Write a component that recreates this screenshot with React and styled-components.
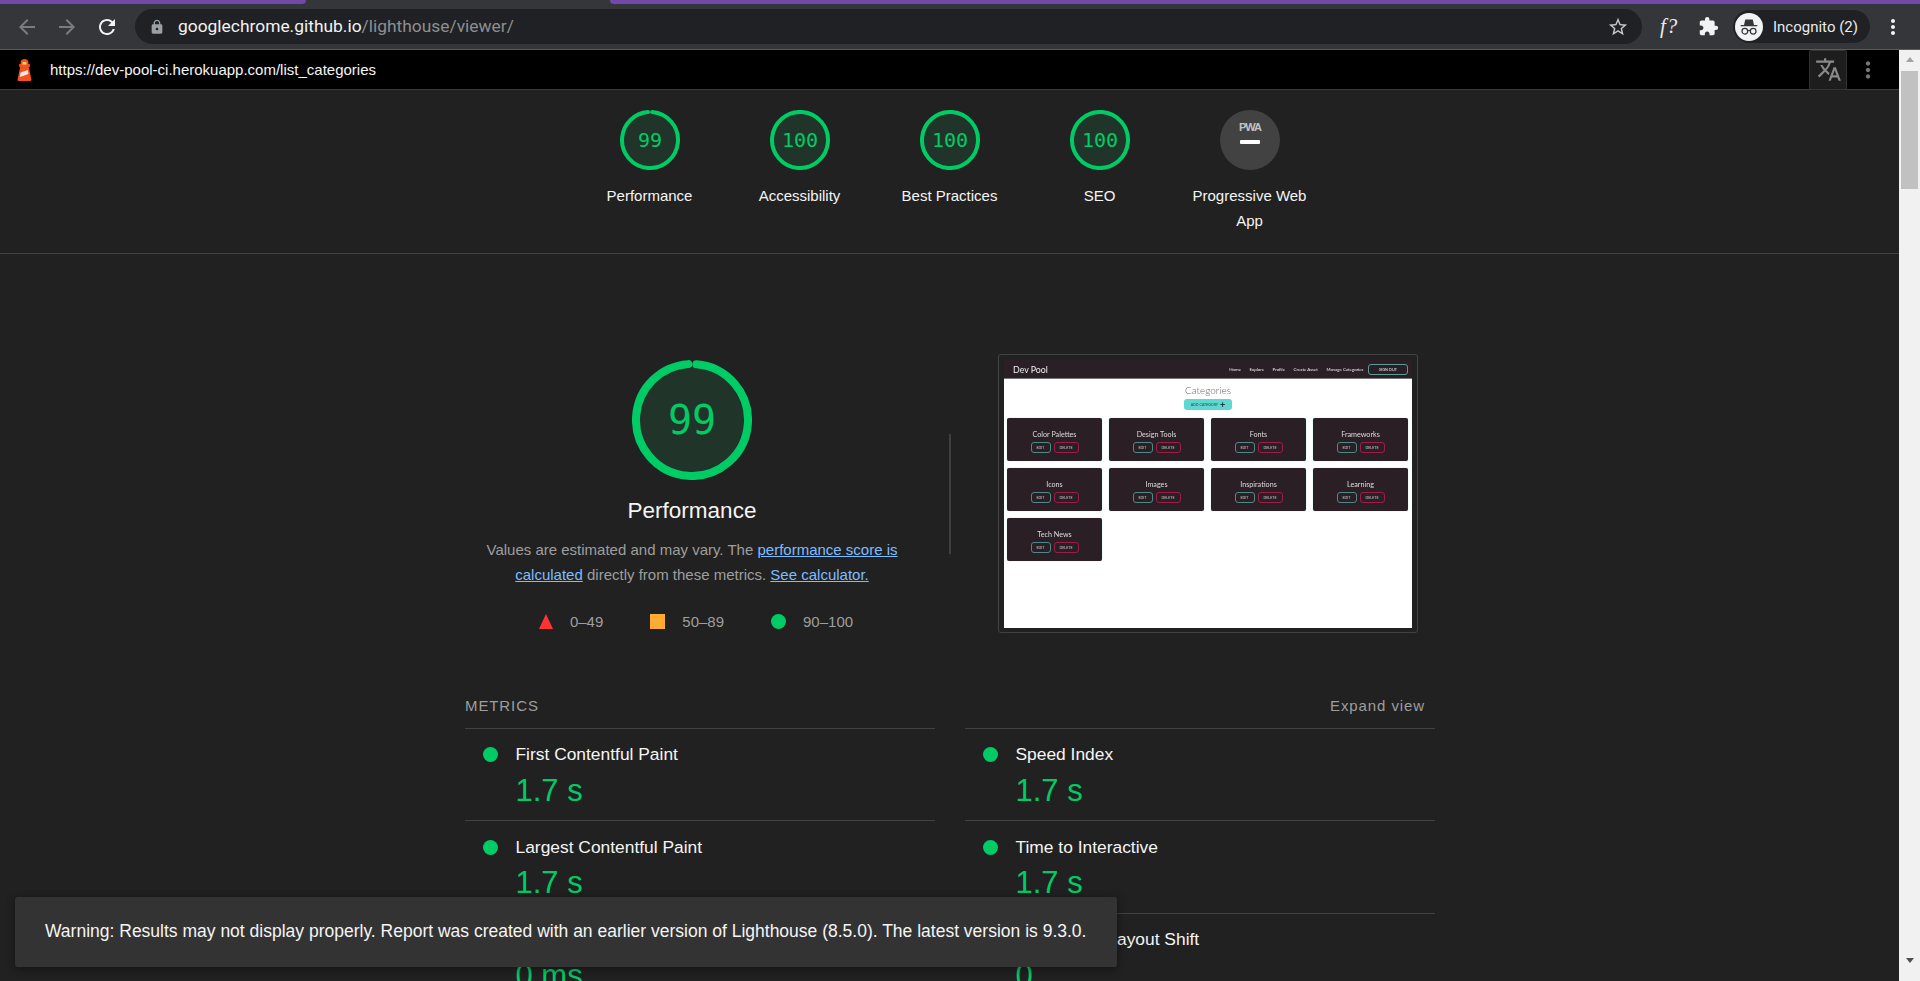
import React from 'react';
import styled, { createGlobalStyle } from 'styled-components';
import { MdArrowBack, MdArrowForward, MdRefresh, MdLock, MdExtension, MdMoreVert, MdTranslate, MdStarBorder } from 'react-icons/md';

const Global = createGlobalStyle`
  html, body { margin: 0; padding: 0; height: 981px; overflow: hidden; background: #212121; }
  * { box-sizing: border-box; }
`;

const Page = styled.div`
  position: relative;
  width: 1920px;
  height: 981px;
  overflow: hidden;
  display: flex;
  flex-direction: column;
  font-family: 'Liberation Sans', Arial, sans-serif;
  background: #212121;
`;

/* browser chrome */
const ChromeBar = styled.div`
  position: relative;
  height: 50px;
  flex: none;
  background: #35363a;
  border-bottom: 1px solid #5a5b5e;
  display: flex;
  align-items: center;
  padding: 4px 0 0 15px;
`;

const TabEdge = styled.div`
  position: absolute;
  top: 0;
  height: 4px;
  background: #7248a8;
  left: ${(p) => p.$left}px;
  width: ${(p) => p.$width}px;
  border-radius: ${(p) => p.$radius};
`;

const NavIcon = styled.span`
  width: 40px;
  height: 24px;
  display: flex;
  align-items: center;
  justify-content: flex-start;
  color: ${(p) => p.$color};
  font-size: 24px;
`;

const Omnibox = styled.div`
  width: 1507px;
  height: 35px;
  border-radius: 18px;
  background: #202124;
  display: flex;
  align-items: center;
  padding: 0 13px 0 14px;
  color: #9aa0a6;
  font-size: 16px;
`;

const UrlText = styled.div`
  margin-left: 13px;
  padding-bottom: 2px;
  flex: 1;
  font-family: Roboto, sans-serif;
  font-size: 17.4px;
  color: #8d8f92;
  span { color: #f1f3f4; }
`;

const ChromeRight = styled.div`
  display: flex;
  align-items: center;
  margin-left: 18px;
`;

const Fx = styled.span`
  width: 38px;
  font-family: 'Liberation Serif', serif;
  font-style: italic;
  font-size: 21px;
  letter-spacing: 1px;
  color: #e8eaed;
`;

const Puzzle = styled.span`
  width: 35px;
  display: flex;
  color: #f1f3f4;
  font-size: 21px;
`;

const ProfilePill = styled.div`
  width: 137px;
  height: 33px;
  border-radius: 17px;
  background: #202124;
  display: flex;
  align-items: center;
  padding-left: 2px;
  gap: 10px;
  color: #e8eaed;
  font-family: Roboto, sans-serif;
  font-size: 15px;
`;

const Avatar = styled.span`
  width: 28px;
  height: 28px;
  border-radius: 50%;
  background: #f1f3f4;
  display: flex;
  align-items: center;
  justify-content: center;
`;

const ChromeMenu = styled.span`
  display: flex;
  margin-left: 11px;
  font-size: 24px;
  color: #f1f3f4;
`;

/* body */
const Body = styled.div`
  flex: 1;
  display: flex;
  min-height: 0;
`;

const Report = styled.div`
  flex: 1;
  min-width: 0;
  overflow: hidden;
  display: flex;
  flex-direction: column;
`;

const Scrollbar = styled.div`
  width: 21px;
  flex: none;
  background: #f1f1f1;
  display: flex;
  flex-direction: column;
  align-items: center;
  padding: 7px 2px 0;
`;

const ScrollArrow = styled.div`
  width: 0;
  height: 0;
  border-left: 4px solid transparent;
  border-right: 4px solid transparent;
  ${(p) => (p.$down ? 'border-top: 5px solid #505050;' : 'border-bottom: 5px solid #a3a3a3;')}
`;

const ScrollThumb = styled.div`
  width: 17px;
  height: 118px;
  background: #c1c1c1;
  margin-top: 9px;
  margin-bottom: auto;
`;

const ScrollBottom = styled.div`
  height: 18px;
`;

const TopBar = styled.div`
  height: 40px;
  flex: none;
  background: #000;
  border-bottom: 1px solid #3b3b3b;
  display: flex;
  align-items: center;
  padding-left: 17px;
`;

const TopUrl = styled.div`
  flex: 1;
  margin-left: 18px;
  padding-bottom: 1px;
  color: #f5f5f5;
  font-size: 15px;
`;

const TranslateBtn = styled.div`
  width: 38px;
  height: 40px;
  background: #1d1d1d;
  border: 1px solid #333;
  border-radius: 2px;
  display: flex;
  align-items: center;
  justify-content: center;
  color: #8a8a8a;
  font-size: 27px;
`;

const TopMenu = styled.div`
  width: 52px;
  padding-right: 10px;
  display: flex;
  justify-content: center;
  color: #757575;
  font-size: 26px;
`;

/* score header */
const ScoresHeader = styled.div`
  flex: none;
  height: 164px;
  padding-top: 20px;
  border-bottom: 1px solid #424242;
  display: flex;
  justify-content: center;
  align-items: flex-start;
`;

const GaugeItem = styled.div`
  width: 150px;
  display: flex;
  flex-direction: column;
  align-items: center;
`;

const GaugeLabel = styled.div`
  margin-top: 13px;
  width: 125px;
  text-align: center;
  font-size: 15px;
  line-height: 25px;
  color: #f5f5f5;
`;

const ScoreText = styled.text`
  font-family: 'DejaVu Sans Mono', monospace;
  fill: #00cc66;
  text-anchor: middle;
`;

const PwaText = styled.text`
  font-family: 'Liberation Sans', Arial, sans-serif;
  font-weight: 700;
  fill: #c2c2c2;
  text-anchor: middle;
  letter-spacing: -1px;
`;

/* category */
const Category = styled.div`
  width: 970px;
  margin: 100px auto 0 465px;
  flex: none;
`;

const Summary = styled.div`
  display: flex;
  align-items: flex-start;
`;

const ScoreBlock = styled.div`
  width: 454px;
  padding-top: 6px;
  display: flex;
  flex-direction: column;
  align-items: center;
`;

const BigTitle = styled.h2`
  margin: 13px 0 0;
  font-size: 22.5px;
  line-height: 36px;
  font-weight: 400;
  color: #f5f5f5;
`;

const Description = styled.p`
  margin: 8px 0 0;
  width: 454px;
  text-align: center;
  font-size: 15px;
  line-height: 25px;
  color: #9e9e9e;
  a { color: #7dbdff; text-decoration: underline; }
`;

const Legend = styled.div`
  margin-top: 22.5px;
  padding-left: 8px;
  display: flex;
  align-items: center;
  height: 24px;
`;

const LegendItem = styled.div`
  display: flex;
  align-items: center;
  gap: 17px;
  font-size: 15px;
  color: #9e9e9e;
  margin-right: 47px;
  &:last-child { margin-right: 0; }
`;

const Triangle = styled.span`
  width: 0;
  height: 0;
  border-left: 7.5px solid transparent;
  border-right: 7.5px solid transparent;
  border-bottom: 15px solid #ff3333;
`;

const Square = styled.span`
  width: 15px;
  height: 15px;
  background: #ffaa33;
`;

const Dot = styled.span`
  width: 15px;
  height: 15px;
  flex: none;
  border-radius: 50%;
  background: #00cc66;
`;

const Divider = styled.div`
  width: 2px;
  height: 120px;
  background: #3f3f3f;
  margin: 80px 47px 0 30px;
  flex: none;
`;

/* page screenshot thumbnail */
const Frame = styled.div`
  width: 420px;
  height: 279px;
  border: 1px solid #424242;
  border-radius: 3px;
  padding: 5px;
  flex: none;
`;

const Thumb = styled.div`
  width: 408px;
  height: 268px;
  background: #fff;
  font-family: Lato, sans-serif;
  filter: blur(0.5px);
`;

const ThumbNav = styled.div`
  height: 19px;
  background: #2b1f26;
  border-bottom: 1px solid #777;
  display: flex;
  align-items: center;
  padding: 0 4px 0 9px;
  color: #eee;
`;

const ThumbBrand = styled.div`
  font-size: 8.8px;
  margin-right: auto;
`;

const ThumbLink = styled.div`
  font-size: 4.4px;
  margin-right: 8.5px;
`;

const ThumbSignOut = styled.div`
  width: 40px;
  height: 11px;
  margin-left: -4px;
  border: 1px solid #5c9c98;
  border-radius: 3px;
  display: flex;
  align-items: center;
  justify-content: center;
  font-size: 3.8px;
`;

const ThumbHeading = styled.div`
  margin-top: 5px;
  text-align: center;
  font-size: 10px;
  font-weight: 300;
  line-height: 12px;
  color: #666;
`;

const ThumbAdd = styled.div`
  width: 48px;
  height: 11px;
  margin: 3px auto 0;
  background: #5fd8d0;
  border-radius: 3px;
  display: flex;
  align-items: center;
  justify-content: center;
  gap: 2px;
  font-size: 3.6px;
  color: #245;
  b { font-size: 9px; line-height: 8px; color: #234; }
`;

const ThumbGrid = styled.div`
  margin-top: 8px;
  padding: 0 3px;
  display: grid;
  grid-template-columns: repeat(4, 95px);
  grid-auto-rows: 43px;
  column-gap: 7px;
  row-gap: 7px;
`;

const ThumbCard = styled.div`
  background: #2b1f26;
  border-radius: 2px;
  box-shadow: 0 0 1px #5fd8d0;
  display: flex;
  flex-direction: column;
  align-items: center;
  padding-top: 12px;
  color: #ddd;
  font-size: 7.2px;
  line-height: 9px;
`;

const ThumbActions = styled.div`
  display: flex;
  gap: 3px;
  margin-top: 3px;
`;

const ThumbBtn = styled.div`
  width: ${(p) => (p.$danger ? 25 : 20)}px;
  height: 11px;
  border: 1px solid ${(p) => (p.$danger ? '#a01c44' : '#4f8a88')};
  border-radius: 3px;
  display: flex;
  align-items: center;
  justify-content: center;
  font-size: 3.6px;
  color: #ccc;
`;

/* metrics */
const MetricsHead = styled.div`
  margin-top: 57px;
  height: 30px;
  display: flex;
  justify-content: space-between;
  align-items: center;
  padding-right: 10px;
  font-size: 15px;
  letter-spacing: 0.9px;
  color: #9e9e9e;
`;

const MetricsGrid = styled.div`
  display: grid;
  grid-template-columns: 470px 470px;
  column-gap: 30px;
  margin-top: 7px;
`;

const MetricRow = styled.div`
  height: 92.5px;
  border-top: 1px solid #424242;
  display: grid;
  grid-template-columns: 32.5px 1fr;
  grid-template-rows: 36px 35px;
  padding: 8px 0 0 18px;
  align-items: center;
`;

const MetricTitle = styled.div`
  font-size: 17.4px;
  color: #f5f5f5;
`;

const MetricValue = styled.div`
  grid-column: 2;
  font-size: 31px;
  line-height: 35px;
  color: #00cc66;
`;

/* toast, sits over the report */
const Toast = styled.div`
  position: absolute;
  left: 15px;
  top: 897px;
  width: 1102px;
  height: 70px;
  background: #333;
  border-radius: 3px;
  box-shadow: 0 2px 10px rgba(0, 0, 0, 0.45);
  padding: 0 30px 2px;
  display: flex;
  align-items: center;
  font-size: 17.5px;
  color: #f5f5f5;
`;

function Gauge({ score, size }) {
  const r = 56;
  const circ = 2 * Math.PI * r;
  return (
    <svg width={size} height={size} viewBox="0 0 120 120">
      <circle cx="60" cy="60" r={r} fill="#20342a" stroke="none" />
      <circle
        cx="60"
        cy="60"
        r={r}
        fill="none"
        stroke="#00cc66"
        strokeWidth="8"
        strokeLinecap={score < 100 ? 'round' : 'butt'}
        strokeDasharray={score < 100 ? `${circ * 0.975} ${circ}` : undefined}
        transform="rotate(-85.5 60 60)"
      />
      <ScoreText x="60" y="74" fontSize="40">{score}</ScoreText>
    </svg>
  );
}

function PwaGauge() {
  return (
    <svg width="60" height="60" viewBox="0 0 60 60">
      <circle cx="30" cy="30" r="30" fill="#424242" />
      <PwaText x="30" y="21" fontSize="11">PWA</PwaText>
      <rect x="20" y="30" width="20" height="4" rx="1" fill="#fff" />
    </svg>
  );
}

function LighthouseIcon() {
  return (
    <svg width="15" height="22" viewBox="0 0 15 22">
      <path d="M7.5 0 C5.5 0 4 1.2 3.6 3 V5 H2.2 V8 H3.2 L0.6 20.5 Q0.4 22 2 22 H13 Q14.6 22 14.4 20.5 L11.8 8 H12.8 V5 H11.4 V3 C11 1.2 9.5 0 7.5 0 Z" fill="#f4511e" />
      <rect x="5.6" y="3" width="3.8" height="2.6" fill="#fdd663" />
      <path d="M3.6 13.5 L10.8 11 L11.4 15 L3 18 Z" fill="#fbe9e7" />
    </svg>
  );
}

function IncognitoIcon() {
  return (
    <svg width="20" height="20" viewBox="0 0 24 24" fill="#35363a">
      <path d="M7.5 3 H16.5 L18 9.5 H22 V11 H2 V9.5 H6 Z" />
      <circle cx="7" cy="17" r="3.4" fill="none" stroke="#35363a" strokeWidth="1.5" />
      <circle cx="17" cy="17" r="3.4" fill="none" stroke="#35363a" strokeWidth="1.5" />
      <path d="M10.4 16.5 Q12 15.5 13.6 16.5" fill="none" stroke="#35363a" strokeWidth="1.3" />
    </svg>
  );
}

const categories = [
  'Color Palettes', 'Design Tools', 'Fonts', 'Frameworks',
  'Icons', 'Images', 'Inspirations', 'Learning', 'Tech News',
];

const navLinks = ['Home', 'Explore', 'Profile', 'Create Asset', 'Manage Categories'];

const scores = [
  { score: 99, label: 'Performance' },
  { score: 100, label: 'Accessibility' },
  { score: 100, label: 'Best Practices' },
  { score: 100, label: 'SEO' },
];

const metrics = [
  { title: 'First Contentful Paint', value: '1.7 s' },
  { title: 'Speed Index', value: '1.7 s' },
  { title: 'Largest Contentful Paint', value: '1.7 s' },
  { title: 'Time to Interactive', value: '1.7 s' },
  { title: 'Total Blocking Time', value: '0 ms' },
  { title: 'Cumulative Layout Shift', value: '0' },
];

export default function App() {
  return (
    <Page>
      <Global />
      <ChromeBar>
        <TabEdge $left={0} $width={306} $radius="0 0 6px 0" />
        <TabEdge $left={610} $width={1310} $radius="0 0 0 6px" />
        <NavIcon $color="#7b7c7f"><MdArrowBack /></NavIcon>
        <NavIcon $color="#7b7c7f"><MdArrowForward /></NavIcon>
        <NavIcon $color="#f1f3f4"><MdRefresh /></NavIcon>
        <Omnibox>
          <MdLock />
          <UrlText><span>googlechrome.github.io</span>/lighthouse/viewer/</UrlText>
          <MdStarBorder size={22} color="#c4c7c9" />
        </Omnibox>
        <ChromeRight>
          <Fx>f?</Fx>
          <Puzzle><MdExtension /></Puzzle>
          <ProfilePill>
            <Avatar><IncognitoIcon /></Avatar>
            Incognito (2)
          </ProfilePill>
          <ChromeMenu><MdMoreVert /></ChromeMenu>
        </ChromeRight>
      </ChromeBar>
      <Body>
        <Report>
          <TopBar>
            <LighthouseIcon />
            <TopUrl>https://dev-pool-ci.herokuapp.com/list_categories</TopUrl>
            <TranslateBtn><MdTranslate /></TranslateBtn>
            <TopMenu><MdMoreVert /></TopMenu>
          </TopBar>
          <ScoresHeader>
            {scores.map((s) => (
              <GaugeItem key={s.label}>
                <Gauge score={s.score} size={60} />
                <GaugeLabel>{s.label}</GaugeLabel>
              </GaugeItem>
            ))}
            <GaugeItem>
              <PwaGauge />
              <GaugeLabel>Progressive Web App</GaugeLabel>
            </GaugeItem>
          </ScoresHeader>
          <Category>
            <Summary>
              <ScoreBlock>
                <Gauge score={99} size={120} />
                <BigTitle>Performance</BigTitle>
                <Description>
                  Values are estimated and may vary. The <a href="#score">performance score is calculated</a> directly from these metrics. <a href="#calc">See calculator.</a>
                </Description>
                <Legend>
                  <LegendItem><Triangle />0–49</LegendItem>
                  <LegendItem><Square />50–89</LegendItem>
                  <LegendItem><Dot />90–100</LegendItem>
                </Legend>
              </ScoreBlock>
              <Divider />
              <Frame>
                <Thumb>
                  <ThumbNav>
                    <ThumbBrand>Dev Pool</ThumbBrand>
                    {navLinks.map((l) => <ThumbLink key={l}>{l}</ThumbLink>)}
                    <ThumbSignOut>SIGN OUT</ThumbSignOut>
                  </ThumbNav>
                  <ThumbHeading>Categories</ThumbHeading>
                  <ThumbAdd>ADD CATEGORY <b>+</b></ThumbAdd>
                  <ThumbGrid>
                    {categories.map((c) => (
                      <ThumbCard key={c}>
                        {c}
                        <ThumbActions>
                          <ThumbBtn>EDIT</ThumbBtn>
                          <ThumbBtn $danger>DELETE</ThumbBtn>
                        </ThumbActions>
                      </ThumbCard>
                    ))}
                  </ThumbGrid>
                </Thumb>
              </Frame>
            </Summary>
            <MetricsHead>
              <span>METRICS</span>
              <span>Expand view</span>
            </MetricsHead>
            <MetricsGrid>
              {metrics.map((m) => (
                <MetricRow key={m.title}>
                  <Dot />
                  <MetricTitle>{m.title}</MetricTitle>
                  <MetricValue>{m.value}</MetricValue>
                </MetricRow>
              ))}
            </MetricsGrid>
          </Category>
        </Report>
        <Scrollbar>
          <ScrollArrow />
          <ScrollThumb />
          <ScrollArrow $down />
          <ScrollBottom />
        </Scrollbar>
      </Body>
      <Toast>Warning: Results may not display properly. Report was created with an earlier version of Lighthouse (8.5.0). The latest version is 9.3.0.</Toast>
    </Page>
  );
}
